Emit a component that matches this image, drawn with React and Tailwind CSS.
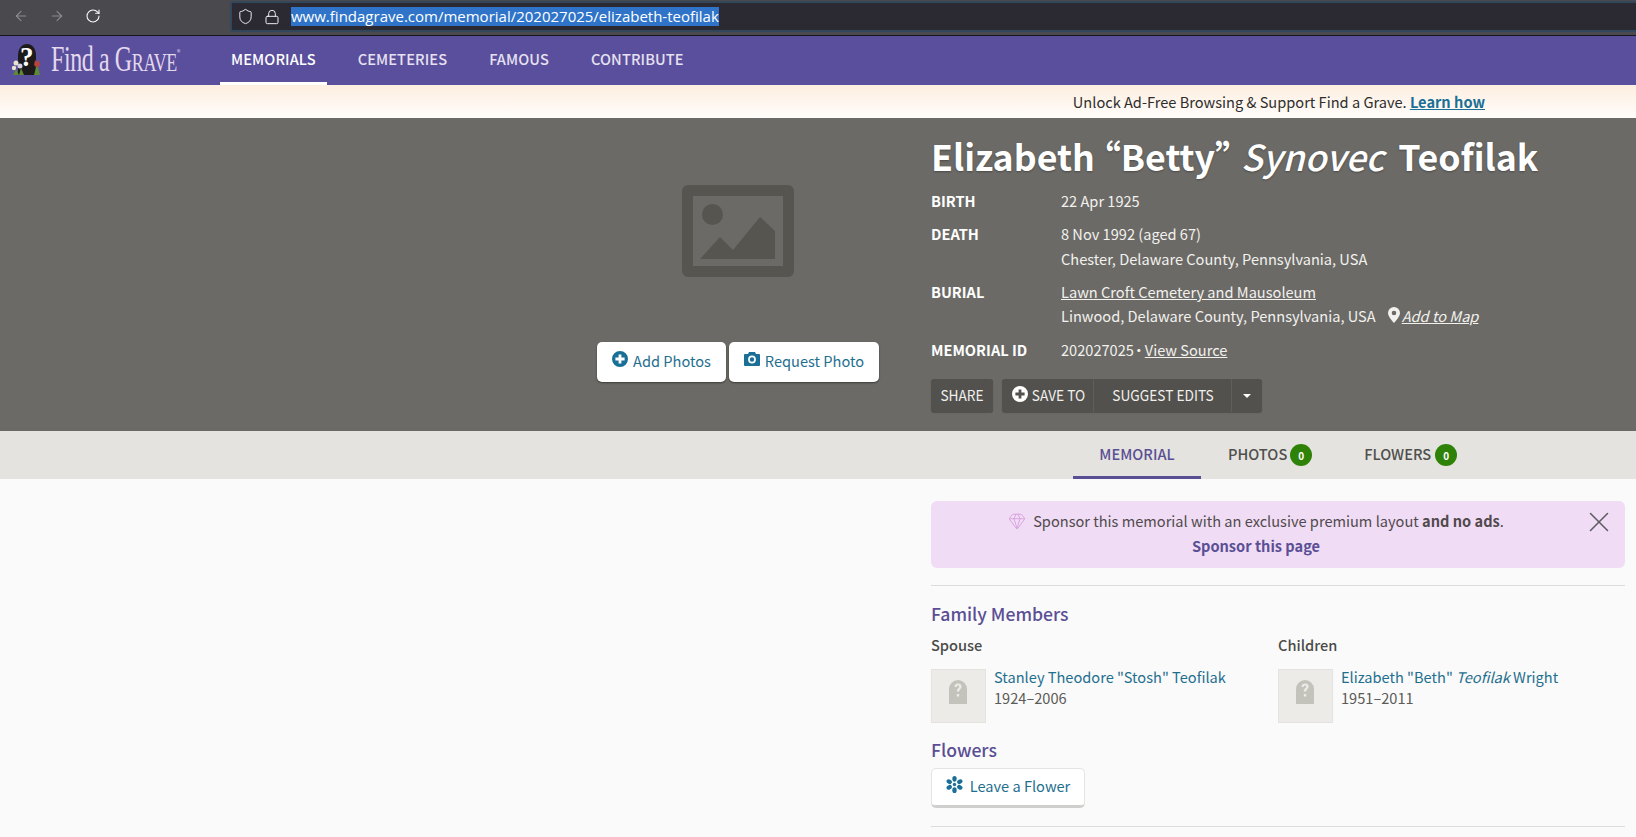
import { ArrowLeft, ArrowRight, RotateCw, Shield, Lock, X, Gem } from 'lucide-react';

const font = { fontFamily: '"Noto Sans CJK SC", "Open Sans", sans-serif', fontFeatureSettings: '"palt"' };

// filled circle with a plus, used on Add Photos and Save To
function PlusCircle({ className }) {
  return (
    <svg viewBox="0 0 16 16" className={className} fill="currentColor">
      <path fillRule="evenodd" d="M8 0a8 8 0 1 1 0 16A8 8 0 0 1 8 0Zm-1.4 3.4v3.2H3.4v2.8h3.2v3.2h2.8V9.4h3.2V6.6H9.4V3.4H6.6Z" />
    </svg>
  );
}

function CameraIcon({ className }) {
  return (
    <svg viewBox="0 0 16 14" className={className} fill="currentColor">
      <path fillRule="evenodd" d="M5 0h6l1 2h3a1 1 0 0 1 1 1v10a1 1 0 0 1-1 1H1a1 1 0 0 1-1-1V3a1 1 0 0 1 1-1h3l1-2Zm3 3.6a3.9 3.9 0 1 0 0 7.8 3.9 3.9 0 0 0 0-7.8Zm0 1.7a2.2 2.2 0 1 1 0 4.4 2.2 2.2 0 0 1 0-4.4Z" />
    </svg>
  );
}

function ImagePlaceholder() {
  return (
    <svg viewBox="0 0 112 92" className="w-[112px] h-[92px]">
      <path
        fillRule="evenodd"
        fill="#565550"
        d="M6 0h100a6 6 0 0 1 6 6v80a6 6 0 0 1-6 6H6a6 6 0 0 1-6-6V6a6 6 0 0 1 6-6Zm5 11v70h90V11H11Z"
      />
      <circle cx="30.5" cy="29.5" r="10.5" fill="#565550" />
      <path d="M18 74l20-22 13 13 27-33 15 14v28Z" fill="#565550" />
    </svg>
  );
}

function MapPin() {
  return (
    <svg viewBox="0 0 12 16" className="w-[12px] h-[16px]" fill="currentColor">
      <path fillRule="evenodd" d="M6 0a6 6 0 0 1 6 6c0 3-3.600 7.600-6 10C3.600 13.600 0 9 0 6a6 6 0 0 1 6-6Zm0 3.700a2.300 2.300 0 1 0 0 4.600 2.300 2.300 0 0 0 0-4.600Z" />
    </svg>
  );
}

function FlowerIcon() {
  return (
    <svg viewBox="0 0 18 18" className="w-[17px] h-[17px]" fill="#1a6f96">
      <g>
        <ellipse cx="9" cy="3" rx="2.300" ry="3" />
        <ellipse cx="9" cy="15" rx="2.300" ry="3" />
        <ellipse cx="3.400" cy="6" rx="2.300" ry="3" transform="rotate(-60 3.400 6)" />
        <ellipse cx="14.600" cy="6" rx="2.300" ry="3" transform="rotate(60 14.600 6)" />
        <ellipse cx="3.400" cy="12" rx="2.300" ry="3" transform="rotate(60 3.400 12)" />
        <ellipse cx="14.600" cy="12" rx="2.300" ry="3" transform="rotate(-60 14.600 12)" />
      </g>
      <circle cx="9" cy="9" r="1.800" />
    </svg>
  );
}

function Logo() {
  return (
    <div className="flex items-center pl-[11px] w-[220px] shrink-0 -mt-[3px]">
      <svg viewBox="0 0 32 34" className="w-[32px] h-[34px]">
        <path d="M7 33V14C7 6 11 2 16 2s9 4 9 12v19Z" fill="#1d1a1c" />
        <circle cx="5" cy="21" r="2.500" fill="#e8e2d2" />
        <circle cx="9" cy="24" r="2.500" fill="#d8cfe0" />
        <circle cx="3" cy="26" r="2.200" fill="#e8e2d2" />
        <path d="M2 33l3-6 3 6Zm6 0l2-7 3 7Z" fill="#5d8a35" />
        <path d="M24 18l2 2 2-2 1 5-3 3-3-3Z" fill="#b5443a" />
        <path d="M23 33l2-8h2l2 8Z" fill="#5d8a35" />
      </svg>
      <span className="text-white text-[27px] font-bold leading-none -ml-[23px] w-[14px] z-10 -mt-[3px]" style={{ fontFamily: '"Liberation Serif", serif' }}>?</span>
      <span
        className="ml-[17px] leading-none text-[#e3d8ee] origin-left scale-y-[1.45] whitespace-nowrap tracking-[-0.4px]"
        style={{ fontFamily: '"Liberation Serif", serif' }}
      >
        <span className="text-[24px]">Find a G</span>
        <span className="text-[18px]">RAVE</span>
      </span>
      <span className="text-[7px] text-[#e3d8ee] self-start mt-[5px]" style={font}>®</span>
    </div>
  );
}

function NavItem({ label, active }) {
  return (
    <div className={`h-[49px] px-[11px] flex items-center border-b-[3px] ${active ? 'border-white text-white' : 'border-transparent text-[#e6e1f2]'}`}>
      <span className="text-[14.6px] font-medium tracking-[0.1px]">{label}</span>
    </div>
  );
}

function Fact({ label, children, className }) {
  return (
    <div className={`flex ${className}`}>
      <div className="w-[130px] shrink-0 font-bold text-white text-[14.6px] leading-[24px]">{label}</div>
      <div className="text-[#f2f1ee] text-[14.6px] leading-[24px]">{children}</div>
    </div>
  );
}

function Relative({ title, dates, children }) {
  return (
    <div className="w-[347px]">
      <div className="font-medium text-[14.6px] leading-[24px] text-[#4a4a48]">{title}</div>
      <div className="flex mt-[12px]">
        <div className="w-[55px] h-[54px] bg-[#ecebe7] border border-[#e4e3df] flex justify-center pt-[10px] pr-[1px]">
          <svg viewBox="0 0 18 24" className="w-[18px] h-[24px]">
            <path fillRule="evenodd" fill="#c4c3bb" d="M0 24V9a9 9 0 0 1 18 0v15ZM9 3.500C6.800 3.500 5.500 5 5.500 7h2.300c0-1 .4-1.500 1.200-1.500s1.200.5 1.200 1.200c0 1.400-2.400 1.800-2.400 4.800h2.400c0-2.200 2.400-2.500 2.400-5C12.600 4.700 11 3.500 9 3.500ZM7.800 14v2.500h2.400V14Z" />
          </svg>
        </div>
        <div className="ml-[8px]">
          <div className="text-[14.6px] leading-[21px] text-[#1f6f8f] -mt-[3px]">{children}</div>
          <div className="text-[14.6px] leading-[21px] text-[#5b5b58]">{dates}</div>
        </div>
      </div>
    </div>
  );
}

function TabBadge({ className }) {
  return (
    <span className={`w-[22px] h-[22px] rounded-full bg-[#2f8208] text-white text-[10px] font-bold flex items-center justify-center ${className}`}>0</span>
  );
}

export default function App() {
  return (
    <div className="w-[1636px] h-[837px] overflow-hidden bg-[#fafafa]" style={font}>
      {/* barra del navegador */}
      <div className="h-[36px] bg-[#4a4a4e] border-b border-[#17171a] flex items-start pt-[1px] text-[#fbfbfe]">
        <div className="w-[230px] h-[30px] flex items-center shrink-0 pl-[13px] gap-[20px]">
          <ArrowLeft size={16} strokeWidth={1.6} className="text-[#8b8b8f]" />
          <ArrowRight size={16} strokeWidth={1.6} className="text-[#8b8b8f]" />
          <RotateCw size={16} strokeWidth={1.6} />
        </div>
        <div className="flex-1 h-[31px] bg-[#2b2a33] border-2 border-r-0 border-[#33475c] rounded-l-[3px] flex items-center pl-[5px]">
          <Shield size={17} strokeWidth={1.3} />
          <Lock size={16} strokeWidth={1.4} className="ml-[10px]" />
          <span
            className="ml-[11px] bg-[#2f74c8] text-white text-[15px] leading-[19px] whitespace-nowrap"
            style={{ fontFamily: '"Open Sans", sans-serif' }}
          >
            www.findagrave.com/memorial/202027025/elizabeth-teofilak
          </span>
        </div>
      </div>

      {/* nav */}
      <div className="h-[49px] bg-[#5a4f9c] flex items-center">
        <Logo />
        <div className="flex gap-[20px]">
          <NavItem label="MEMORIALS" active />
          <NavItem label="CEMETERIES" />
          <NavItem label="FAMOUS" />
          <NavItem label="CONTRIBUTE" />
        </div>
      </div>

      {/* banner */}
      <div className="h-[33px] bg-gradient-to-b from-[#fdeee0] to-[#fffdfb] flex items-center justify-end pr-[151px] text-[14.6px] text-[#2e2e2c]">
        <span>
          Unlock Ad-Free Browsing &amp; Support Find a Grave.{' '}
          <span className="font-bold text-[#1a6f96] underline">Learn how</span>
        </span>
      </div>

      {/* hero */}
      <div className="h-[313px] bg-[#6b6a66] flex">
        <div className="w-[931px] shrink-0 pr-[52px] flex flex-col items-end">
          <div className="w-[282px] pt-[67px] flex flex-col items-center">
            <ImagePlaceholder />
            <div className="flex gap-[3px] mt-[65px]">
              <div className="h-[40px] w-[129px] pb-[2px] bg-white rounded-[5px] shadow-[0_1px_2px_rgba(0,0,0,0.45)] flex items-center justify-center text-[14.6px] text-[#1f6f8f]">
                <PlusCircle className="w-[16px] h-[16px] mr-[5px] -mt-[4px] text-[#1a6f96]" />
                Add Photos
              </div>
              <div className="h-[40px] w-[150px] pb-[2px] bg-white rounded-[5px] shadow-[0_1px_2px_rgba(0,0,0,0.45)] flex items-center justify-center text-[14.6px] text-[#1f6f8f]">
                <CameraIcon className="w-[16px] h-[14px] mr-[5px] -mt-[4px] text-[#1a6f96]" />
                Request Photo
              </div>
            </div>
          </div>
        </div>
        <div className="flex-1 pt-[12px]">
          <h1 className="text-[35.7px] leading-[52px] font-semibold text-white whitespace-nowrap [text-shadow:0_1px_2px_rgba(0,0,0,0.3)]">
            Elizabeth “Betty” <em className="font-medium mr-[6px]">Synovec</em> Teofilak
          </h1>
          <Fact label="BIRTH" className="mt-[7px]">22 Apr 1925</Fact>
          <Fact label="DEATH" className="mt-[9px]">
            <div>8 Nov 1992 (aged 67)</div>
            <div className="mt-[1px]">Chester, Delaware County, Pennsylvania, USA</div>
          </Fact>
          <Fact label="BURIAL" className="mt-[9px]">
            <div className="underline">Lawn Croft Cemetery and Mausoleum</div>
            <div className="flex items-center">
              Linwood, Delaware County, Pennsylvania, USA
              <span className="ml-[12px] -mt-[2px]"><MapPin /></span>
              <em className="underline ml-[2px]">Add to Map</em>
            </div>
          </Fact>
          <Fact label="MEMORIAL ID" className="mt-[10px]">
            202027025 <span className="-ml-[2px]">·</span> <span className="underline -ml-[1px]">View Source</span>
          </Fact>
          <div className="flex mt-[17px] text-[13.7px] text-[#f0efec]">
            <div className="h-[33px] w-[62px] bg-[#52514d] rounded-[3px] shadow-[0_1px_1px_rgba(0,0,0,0.25)] flex items-center justify-center">
              <span className="inline-block scale-y-[1.07]">SHARE</span>
            </div>
            <div className="ml-[9px] h-[33px] flex bg-[#52514d] rounded-[3px] shadow-[0_1px_1px_rgba(0,0,0,0.25)]">
              <div className="w-[92px] pl-[2px] flex items-center justify-center border-r border-[#5f5e5a]">
                <PlusCircle className="w-[16px] h-[16px] mr-[4px] -mt-[3px] text-white" />
                <span className="inline-block scale-y-[1.07]">SAVE TO</span>
              </div>
              <div className="w-[138px] pl-[1px] flex items-center justify-center border-r border-[#5f5e5a]">
                <span className="inline-block scale-y-[1.07]">SUGGEST EDITS</span>
              </div>
              <div className="w-[30px] flex items-center justify-center">
                <span className="w-0 h-0 border-x-[4px] border-x-transparent border-t-[4px] border-t-white" />
              </div>
            </div>
          </div>
        </div>
      </div>

      {/* tabs */}
      <div className="h-[48px] bg-[#e4e3df] flex pl-[1073px] text-[14.6px] font-medium text-[#4f4f4c]">
        <div className="w-[128px] flex items-center justify-center border-b-[3px] border-[#5a4f94] text-[#5a4f94]">MEMORIAL</div>
        <div className="ml-[27px] flex items-center">
          <span className="-mt-[2px]">PHOTOS</span>
          <TabBadge className="ml-[3px]" />
        </div>
        <div className="ml-[52px] flex items-center">
          <span className="-mt-[2px]">FLOWERS</span>
          <TabBadge className="ml-[4px]" />
        </div>
      </div>

      {/* contenido */}
      <div className="pl-[931px] pr-[11px] pt-[22px]">
        <div className="relative h-[67px] bg-[#f0dcf5] rounded-[6px] flex flex-col items-center pt-[8px] text-[14.6px] leading-[24px] text-[#504a4c] pr-[44px]">
          <div className="flex items-center">
            <Gem size={18} strokeWidth={1.1} className="text-[#d49ada] mr-[7px]" />
            <span>Sponsor this memorial with an exclusive premium layout <b className="font-bold">and no ads</b>.</span>
          </div>
          <div className="font-bold text-[#5a4f94] mt-[1px]">Sponsor this page</div>
          <X size={34} strokeWidth={1.1} className="absolute right-[9px] top-[4px] text-[#5f5b62]" />
        </div>
        <div className="mt-[17px] border-t border-[#dcdcdc]" />
        <h2 className="mt-[15px] text-[17.6px] leading-[26px] font-medium text-[#5a4f94]">Family Members</h2>
        <div className="flex mt-[6px]">
          <Relative title="Spouse" dates="1924–2006">Stanley Theodore "Stosh" Teofilak</Relative>
          <Relative title="Children" dates="1951–2011">
            Elizabeth "Beth" <em>Teofilak</em> Wright
          </Relative>
        </div>
        <h2 className="mt-[14px] text-[17.6px] leading-[26px] font-medium text-[#5a4f94]">Flowers</h2>
        <div className="mt-[5px] w-[154px] h-[40px] pb-[2px] bg-white rounded-[5px] border border-[#e4e4e2] border-b-[3px] border-b-[#cfcfcd] flex items-center justify-center text-[14.6px] text-[#1f6f8f]">
          <span className="mr-[7px] -mt-[3px]"><FlowerIcon /></span>
          Leave a Flower
        </div>
        <div className="mt-[18px] border-t border-[#dcdcdc]" />
      </div>
    </div>
  );
}
